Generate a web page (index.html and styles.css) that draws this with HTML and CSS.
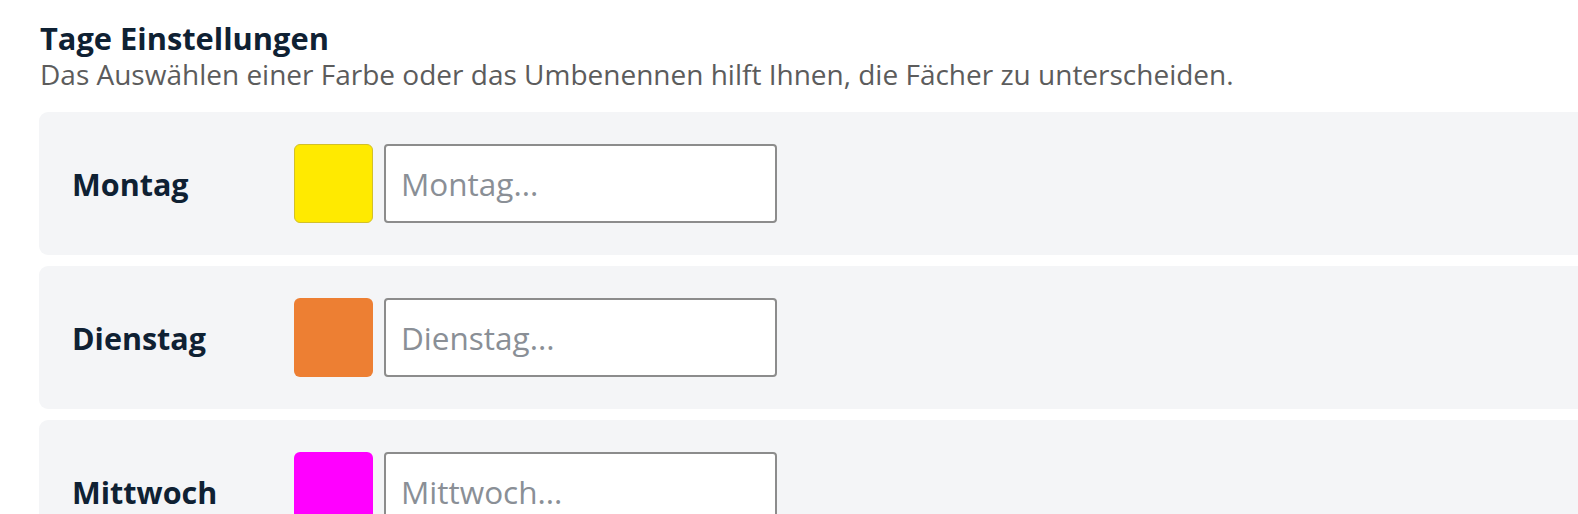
FILE: index.html
```html
<!DOCTYPE html>
<html lang="de">
<head>
<meta charset="utf-8">
<title>Tage Einstellungen</title>
<link rel="stylesheet" href="styles.css">
</head>
<body>
<section class="settings">
  <header class="settings-head">
    <h2 class="settings-title">Tage Einstellungen</h2>
    <p class="settings-sub">Das Auswählen einer Farbe oder das Umbenennen hilft Ihnen, die Fächer zu unterscheiden.</p>
  </header>
  <div class="day-list">
    <div class="day-card">
      <span class="day-label">Montag</span>
      <span class="swatch swatch-yellow"></span>
      <input class="day-input" type="text" placeholder="Montag...">
    </div>
    <div class="day-card">
      <span class="day-label">Dienstag</span>
      <span class="swatch swatch-orange"></span>
      <input class="day-input" type="text" placeholder="Dienstag...">
    </div>
    <div class="day-card">
      <span class="day-label">Mittwoch</span>
      <span class="swatch swatch-magenta"></span>
      <input class="day-input" type="text" placeholder="Mittwoch...">
    </div>
  </div>
</section>
</body>
</html>
```
FILE: styles.css
```css
html, body {
  margin: 0;
  padding: 0;
  background: #ffffff;
  overflow: hidden;
}
body {
  font-family: "Open Sans", "Noto Sans", sans-serif;
  color: #0f2133;
}
.settings {
  padding: 20px 0 0 39px;
}
.settings-head {
  padding-left: 1px;
}
.settings-title {
  margin: 0;
  font-size: 30.8px;
  font-weight: 700;
  line-height: 37px;
  color: #0f2133;
}
.settings-sub {
  margin: 0;
  font-size: 28px;
  line-height: 35px;
  color: #5c5c5c;
}
.day-list {
  margin-top: 20px;
  display: flex;
  flex-direction: column;
  gap: 11px;
  width: calc(100% + 20px);
}
.day-card {
  display: flex;
  align-items: center;
  height: 143px;
  padding-left: 33px;
  background: #f4f5f7;
  border-radius: 9px;
  box-sizing: border-box;
}
.day-label {
  width: 222px;
  font-size: 30.5px;
  font-weight: 700;
  color: #0f2133;
}
.swatch {
  width: 79px;
  height: 79px;
  border-radius: 6px;
  box-sizing: border-box;
  margin-right: 11px;
}
.swatch-yellow {
  background: #ffea00;
  border: 1.5px solid #d2c02a;
}
.swatch-orange {
  background: #ed7f33;
}
.swatch-magenta {
  background: #ff00ff;
}
.day-input {
  width: 393px;
  height: 79px;
  box-sizing: border-box;
  border: 2px solid #8c8c8c;
  border-radius: 4px;
  background: #ffffff;
  padding: 0 15px;
  font-family: "Open Sans", "Noto Sans", sans-serif;
  font-size: 31.5px;
  color: #0f2133;
}
.day-input::placeholder {
  color: #8a8f96;
  opacity: 1;
}
```
